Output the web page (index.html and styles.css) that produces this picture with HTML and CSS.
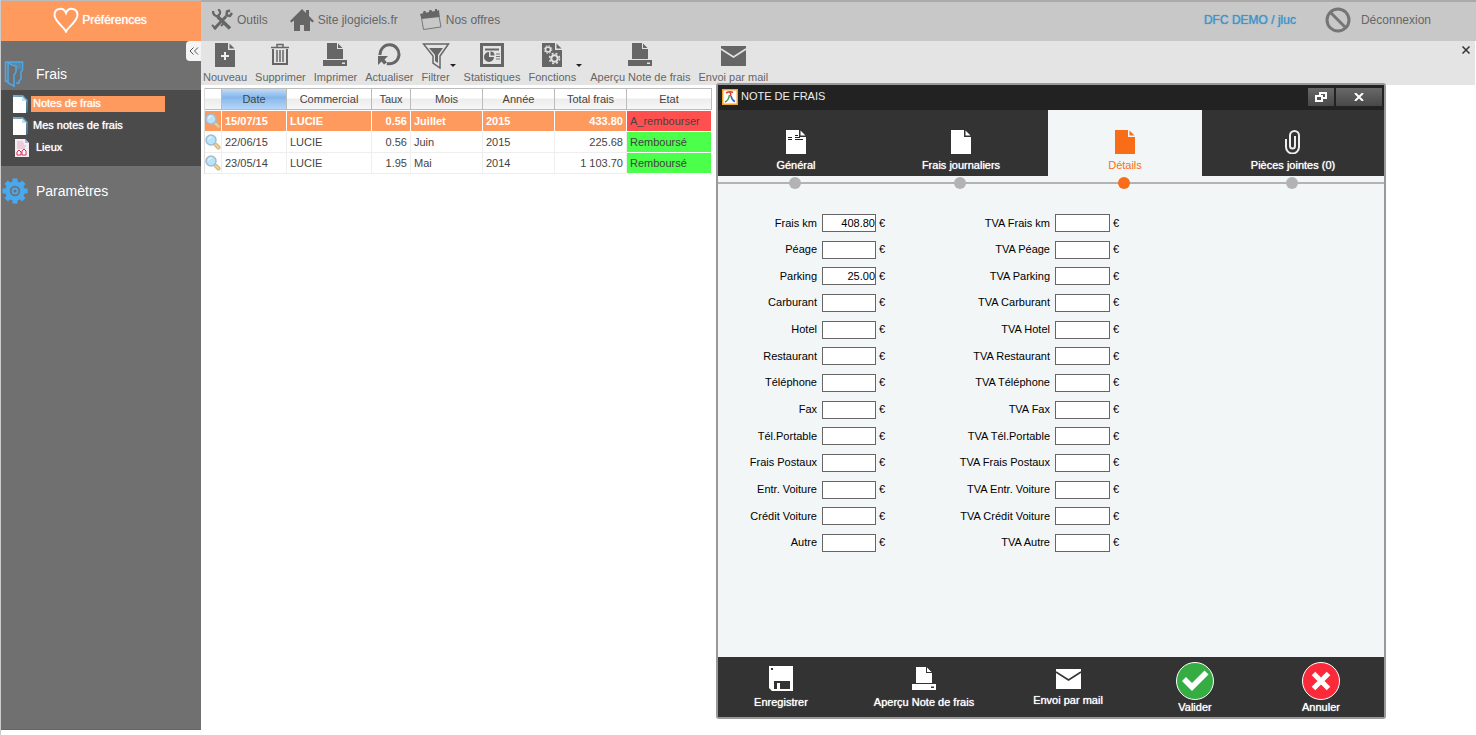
FILE: index.html
```html
<!DOCTYPE html>
<html lang="fr">
<head>
<meta charset="utf-8">
<title>Notes de frais</title>
<link rel="stylesheet" href="styles.css">
</head>
<body>
<svg class="defs" aria-hidden="true">
  <defs>
    <linearGradient id="steel" x1="0" y1="0" x2="1" y2="1"><stop offset="0" stop-color="#7fb0c8"/><stop offset="1" stop-color="#3f6f8c"/></linearGradient>
    <symbol id="i-page" viewBox="0 0 20 24"><path fill="currentColor" d="M0 0h13v7h7v17H0z"/><path fill="currentColor" d="M14.500 0.500L19.500 5.500h-5z"/></symbol>
    <symbol id="i-printer" viewBox="0 0 24 24"><path fill="currentColor" fill-rule="evenodd" d="M4 0h10v6h6v10H4zM15 0.500L19.500 5H15zM0 17h24v6H0zM19 19.500v1.500h3v-1.500z"/></symbol>
    <symbol id="i-mail" viewBox="0 0 25 20"><path fill="currentColor" d="M0 0h25v20H0z"/><path class="fold" fill="none" stroke-width="1.500" d="M0 3l12.500 8L25 3"/></symbol>
    <symbol id="i-loupe" viewBox="0 0 16 16"><path stroke="#c9b48e" stroke-width="4" stroke-linecap="round" d="M10.500 10.500l3 3"/><path stroke="#f3cf8a" stroke-width="2" stroke-linecap="round" d="M10.500 10.500l3 3"/><circle cx="6" cy="6" r="5" fill="#b9e3fa" stroke="#9fbdd2" stroke-width="1.500"/><path d="M3.500 5.500a3 3 0 0 1 3-2.500" stroke="#fff" fill="none"/></symbol>
    <symbol id="i-note" viewBox="0 0 16 18"><path fill="url(#steel)" d="M1 0h10l5 5v12l-2 1V6H1z"/><path fill="#fff" d="M1 2h9v4h4v12H1z"/><path fill="#bfe0ee" d="M10 1l5 5h-5z"/></symbol>
  </defs>
</svg>
<div class="app">
  <aside class="sidebar">
    <a class="prefs" href="#"><svg width="26" height="26" viewBox="0 0 26 26"><path d="M13 24.500C11 20 1.500 14.500 1.500 8c0-7 9-8.500 11.500-2C15.500-.500 24.500 1 24.500 8c0 6.500-9.500 12-11.500 16.500z" fill="none" stroke="#fff" stroke-width="2"/></svg><span>Préférences</span></a>
    <nav class="menu">
      <button class="collapse" aria-label="Réduire le menu"><svg width="10" height="8" viewBox="0 0 10 8"><path d="M4.500 .500L1 4l3.500 3.500M9 .500L5.500 4 9 7.500" fill="none" stroke="#555"/></svg></button>
      <a class="section first" href="#"><svg width="26" height="28" viewBox="0 0 26 28"><path d="M3.500 22V2h17v8l-1.500 2v7l-2 2v2h-3M3.500 2v19l3 1M10 5l4 1v6l-2 3v11l-6-3V2.500z" fill="none" stroke="#49a9ee" stroke-width="1.500"/><path d="M7 2l5 3 4 5 3-1V2z" fill="#49a9ee" opacity=".4"/></svg>Frais</a>
      <ul class="submenu">
        <li><a class="current" href="#"><svg width="16" height="18"><use href="#i-note"/></svg><span>Notes de frais</span></a></li>
        <li><a href="#"><svg width="16" height="18"><use href="#i-note"/></svg><span>Mes notes de frais</span></a></li>
        <li><a class="places" href="#"><svg width="16" height="18" viewBox="0 0 16 18"><path d="M1 0h10l4 4v14H1z" fill="#f3eef6"/><path d="M11 0v4h4z" fill="#a9b7d8"/><path d="M3 3h6M3 5h7M3 7h9M3 9h8" stroke="#e9a9b9"/><path d="M3 16v-3l2-2 2 2v3zM8 16v-4l2-2 2 2v4z" fill="#fff" stroke="#d9315a"/></svg><span>Lieux</span></a></li>
      </ul>
      <a class="section" href="#"><svg width="26" height="26" viewBox="0 0 26 26"><g fill="none" stroke="#49a9ee"><circle cx="13" cy="13" r="7.500" stroke-width="4.500"/><circle cx="13" cy="13" r="2.500" stroke-width="2"/></g><path stroke="#49a9ee" stroke-width="5" d="M13 0.500v4M13 21.500v4M.500 13h4M21.500 13h4M4.200 4.200L7 7M19 19l2.800 2.800M21.800 4.200L19 7M7 19l-2.800 2.800"/></svg>Paramètres</a>
    </nav>
  </aside>
  <div class="content">
    <header class="topbar">
      <a href="#"><svg width="22" height="22" viewBox="0 0 22 22"><g fill="none" stroke="#666"><path d="M6.500 7.500L19 19.500" stroke-width="3.500"/><path d="M2 2c0 5 4 6 6 4s1-5-1-5.500" stroke-width="2.200"/><path d="M15 7.500L3 20" stroke-width="3"/><path d="M19 1.500l-3 1-.500 4 3.500.500 2-3" stroke-width="2.500"/><path d="M13 14l-3 3M1 16l4 4" stroke-width="2"/></g></svg>Outils</a>
      <a href="#"><svg width="24" height="22" viewBox="0 0 24 22"><path fill="#666" d="M12 0l4 4V1h3v6l5 5-1.500 1.500L20 11.500V22h-6v-6h-4v6H4V11.500l-2.500 2L0 12z"/></svg>Site jlogiciels.fr</a>
      <a href="#"><svg width="22" height="22" viewBox="0 0 22 22"><path fill="#666" d="M0 5l3-.800L3.500 2l2 0 .500 1.700 3-.600.500-2h2l.500 1.500 3-.600V0h2v1.800L19 1l.800 7L1.500 10z"/><path fill="none" stroke="#777" d="M1.500 9l2 11.500L21 18 19 7"/></svg>Nos offres</a>
      <a class="account" href="#">DFC DEMO / jluc</a>
      <a class="logout" href="#"><svg width="26" height="26" viewBox="0 0 26 26"><g fill="none" stroke="#757575" stroke-width="3"><circle cx="13" cy="13" r="11"/><path d="M5 5l16 16"/></g></svg>Déconnexion</a>
    </header>
    <div class="toolbar">
      <button><span class="stack"><svg width="20" height="24" viewBox="0 0 20 24"><use href="#i-page"/><path d="M6 13h8M10 9v8" stroke="#eee" stroke-width="2"/></svg>Nouveau</span></button>
      <button><span class="stack"><svg width="20" height="24" viewBox="0 0 20 24"><g fill="none" stroke="#666"><path d="M1 4.500h18M7 4V1.500h6V4" stroke-width="1.500"/><path d="M3 6v15h14V6" stroke-width="2"/><path d="M7 7v12M10 7v12M13 7v12" stroke-width="1.500"/></g></svg>Supprimer</span></button>
      <button><span class="stack"><svg width="24" height="24"><use href="#i-printer"/></svg>Imprimer</span></button>
      <button><span class="stack"><svg width="24" height="24" viewBox="0 0 24 24"><path d="M3 12A9.500 9.500 0 1 1 10 20.500" fill="none" stroke="#666" stroke-width="3"/><path d="M1 13h10l-3.500 3.500 2.500 3-3 2-2.500-3L1 22z" fill="#666"/></svg>Actualiser</span></button>
      <button><span class="stack"><svg width="28" height="26" viewBox="0 0 28 26"><path d="M1.500 1h25L18 13v12l-7-5v-7z" fill="none" stroke="#666" stroke-width="1.500"/><path d="M7 5h14l-5 7v8l-3-2v-6z" fill="#666"/></svg>Filtrer</span><span class="caret"></span></button>
      <button><span class="stack"><svg width="24" height="24" viewBox="0 0 24 24"><path d="M1.500 1.500h21v21h-21z" fill="none" stroke="#666" stroke-width="3"/><path d="M5 6.500h14" stroke="#666" stroke-width="2"/><path d="M9 9v5h5a5 5 0 1 1-5-5zM10.500 8.500a4 4 0 0 1 4 4h-4z" fill="#666"/><path d="M16 11h4M16 13.500h4M16 16h4" stroke="#777"/></svg>Statistiques</span></button>
      <button><span class="stack"><svg width="20" height="24" viewBox="0 0 20 24"><use href="#i-page"/><g fill="none" stroke="#e4e4e4"><circle cx="6" cy="6.500" r="2.500" stroke-width="1.500"/><circle cx="6" cy="6.500" r="3.800" stroke-dasharray="1.500 1.500"/><circle cx="12.500" cy="15.500" r="3.200" stroke-width="2"/><circle cx="12.500" cy="15.500" r="5" stroke-width="1.500" stroke-dasharray="2 2"/></g></svg>Fonctions</span><span class="caret"></span></button>
      <button><span class="stack"><svg width="24" height="24"><use href="#i-printer"/></svg>Aperçu Note de frais</span></button>
      <button><span class="stack"><svg width="25" height="20"><use href="#i-mail"/></svg>Envoi par mail</span></button>
      <button class="close-tab" aria-label="Fermer l'onglet"><svg width="8" height="8" viewBox="0 0 8 8"><path d="M.500 .500l7 7M7.500 .500l-7 7" stroke="#333" stroke-width="1.500"/></svg></button>
    </div>
    <main class="list">
      <table>
        <colgroup><col class="c-icon"><col class="c-date"><col class="c-who"><col class="c-rate"><col class="c-mid"><col class="c-mid"><col class="c-mid"><col class="c-state"></colgroup>
        <thead><tr><th></th><th class="sorted">Date</th><th>Commercial</th><th>Taux</th><th>Mois</th><th>Année</th><th>Total frais</th><th>Etat</th></tr></thead>
        <tbody>
          <tr class="selected"><td class="view"><svg width="16" height="16"><use href="#i-loupe"/></svg></td><td>15/07/15</td><td>LUCIE</td><td class="num">0.56</td><td>Juillet</td><td>2015</td><td class="num">433.80</td><td class="due">A_rembourser</td></tr>
          <tr><td class="view"><svg width="16" height="16"><use href="#i-loupe"/></svg></td><td>22/06/15</td><td>LUCIE</td><td class="num">0.56</td><td>Juin</td><td>2015</td><td class="num">225.68</td><td class="paid">Remboursé</td></tr>
          <tr><td class="view"><svg width="16" height="16"><use href="#i-loupe"/></svg></td><td>23/05/14</td><td>LUCIE</td><td class="num">1.95</td><td>Mai</td><td>2014</td><td class="num">1 103.70</td><td class="paid">Remboursé</td></tr>
        </tbody>
      </table>
    </main>
  </div>
</div>

<section class="window" role="dialog" aria-labelledby="win-title">
  <header class="titlebar">
    <svg width="16" height="16" viewBox="0 0 16 16"><path d="M.750 .750h14.500v14.500H.750z" fill="#fff" stroke="#f5a52c" stroke-width="1.500"/><g fill="none" stroke-width="1.500"><path d="M4 4c3-1.500 6-1 7-.500M8 3.500c1 1 1 2 .500 3.500" stroke="#e03a2c"/><path d="M7.500 6C7 9 5.500 12 3 13" stroke="#39a245"/><path d="M9 7c.500 2.500 1.500 4.500 4 5.500" stroke="#3a62b8"/></g></svg>
    <h1 id="win-title">NOTE DE FRAIS</h1>
    <button class="restore" aria-label="Restaurer"><svg width="12" height="10" viewBox="0 0 12 10"><path d="M5 3V1h6v5H8M1 4h6v5H1z" fill="none" stroke="#fff" stroke-width="2"/></svg></button>
    <button class="close" aria-label="Fermer"><svg width="10" height="8" viewBox="0 0 10 8"><path d="M1 0l8 8M9 0L1 8" stroke="#fff" stroke-width="2"/></svg></button>
  </header>
  <div class="tabs" role="tablist">
    <button role="tab"><svg width="20" height="24" viewBox="0 0 20 24"><use href="#i-page"/><path d="M2 7.500h4M2 9.500h4M9 5.500h3M9 7.500h5M9 9.500h8" stroke="#222"/></svg>Général</button>
    <button role="tab"><svg width="20" height="24"><use href="#i-page"/></svg>Frais journaliers</button>
    <button role="tab" aria-selected="true" class="active"><svg width="20" height="24"><use href="#i-page"/></svg>Détails</button>
    <button role="tab"><svg width="18" height="24" viewBox="0 0 18 24"><path d="M2 9v8a6.500 6.500 0 0 0 13 0V5.500a4.500 4.500 0 0 0-9 0V16a2.500 2.500 0 0 0 5 0V6" fill="none" stroke="#eee" stroke-width="2"/></svg>Pièces jointes (0)</button>
  </div>
  <div class="steps"><i></i><i></i><i class="active"></i><i></i></div>
  <form class="fields">
    <div class="column">
      <div class="field"><label for="km">Frais km</label><input id="km" value="408.80"><span>€</span></div>
      <div class="field"><label for="peage">Péage</label><input id="peage"><span>€</span></div>
      <div class="field"><label for="parking">Parking</label><input id="parking" value="25.00"><span>€</span></div>
      <div class="field"><label for="carburant">Carburant</label><input id="carburant"><span>€</span></div>
      <div class="field"><label for="hotel">Hotel</label><input id="hotel"><span>€</span></div>
      <div class="field"><label for="restaurant">Restaurant</label><input id="restaurant"><span>€</span></div>
      <div class="field"><label for="telephone">Téléphone</label><input id="telephone"><span>€</span></div>
      <div class="field"><label for="fax">Fax</label><input id="fax"><span>€</span></div>
      <div class="field"><label for="portable">Tél.Portable</label><input id="portable"><span>€</span></div>
      <div class="field"><label for="postaux">Frais Postaux</label><input id="postaux"><span>€</span></div>
      <div class="field"><label for="entretien">Entr. Voiture</label><input id="entretien"><span>€</span></div>
      <div class="field"><label for="credit">Crédit Voiture</label><input id="credit"><span>€</span></div>
      <div class="field"><label for="autre">Autre</label><input id="autre"><span>€</span></div>
    </div>
    <div class="column vat">
      <div class="field"><label for="tva-km">TVA Frais km</label><input id="tva-km"><span>€</span></div>
      <div class="field"><label for="tva-peage">TVA Péage</label><input id="tva-peage"><span>€</span></div>
      <div class="field"><label for="tva-parking">TVA Parking</label><input id="tva-parking"><span>€</span></div>
      <div class="field"><label for="tva-carburant">TVA Carburant</label><input id="tva-carburant"><span>€</span></div>
      <div class="field"><label for="tva-hotel">TVA Hotel</label><input id="tva-hotel"><span>€</span></div>
      <div class="field"><label for="tva-restaurant">TVA Restaurant</label><input id="tva-restaurant"><span>€</span></div>
      <div class="field"><label for="tva-telephone">TVA Téléphone</label><input id="tva-telephone"><span>€</span></div>
      <div class="field"><label for="tva-fax">TVA Fax</label><input id="tva-fax"><span>€</span></div>
      <div class="field"><label for="tva-portable">TVA Tél.Portable</label><input id="tva-portable"><span>€</span></div>
      <div class="field"><label for="tva-postaux">TVA Frais Postaux</label><input id="tva-postaux"><span>€</span></div>
      <div class="field"><label for="tva-entretien">TVA Entr. Voiture</label><input id="tva-entretien"><span>€</span></div>
      <div class="field"><label for="tva-credit">TVA Crédit Voiture</label><input id="tva-credit"><span>€</span></div>
      <div class="field"><label for="tva-autre">TVA Autre</label><input id="tva-autre"><span>€</span></div>
    </div>
  </form>
  <footer class="actions">
    <button><svg width="24" height="25" viewBox="0 0 24 25"><path fill="#fff" fill-rule="evenodd" d="M0 0h24v25H3l-3-3zM2 2v2h2V2zM5 15v8h16v-8z"/><path fill="#fff" d="M8 17h3v6H8z"/></svg>Enregistrer</button>
    <button><svg width="24" height="24"><use href="#i-printer"/></svg>Aperçu Note de frais</button>
    <button><svg width="25" height="20"><use href="#i-mail"/></svg>Envoi par mail</button>
    <button class="round"><svg width="38" height="38" viewBox="0 0 38 38"><circle cx="19" cy="19" r="18.500" fill="#35ad43" stroke="#fff"/><path d="M6 19l4-4 6 6L28.500 8.500l4 4L16 29z" fill="#fff"/></svg>Valider</button>
    <button class="round"><svg width="38" height="38" viewBox="0 0 38 38"><circle cx="19" cy="19" r="18.500" fill="#fb2a3b" stroke="#fff"/><path d="M11.500 11.500l15 15M26.500 11.500l-15 15" stroke="#fff" stroke-width="5"/></svg>Annuler</button>
  </footer>
</section>
</body>
</html>
```
FILE: styles.css
```css
* { box-sizing: border-box; }
body { margin: 0; font: 11px/13px "Liberation Sans", Arial, sans-serif; color: #444; background: #fff; overflow: hidden; }
.defs { position: absolute; width: 0; height: 0; }
a { color: inherit; text-decoration: none; }
button { font: inherit; color: inherit; border: 0; padding: 0; background: none; cursor: pointer; }
svg { display: block; flex: none; }

.app { display: flex; min-height: 100vh; padding-bottom: 5px; border-left: 1px solid #ccc; }
.sidebar { display: flex; flex-direction: column; width: 200px; flex: none; color: #fff; }
.prefs { display: flex; align-items: center; justify-content: center; gap: 3px; height: 41px; padding: 0 2px 2px 0; border-top: 1px solid #bbb; background: #ff9a5e; font-size: 12px; text-shadow: 0 0 1px currentColor; }
.menu { position: relative; flex: 1; background: #707070; border-bottom: 1px solid #666; }
.collapse { position: absolute; top: 0; right: 0; width: 15px; height: 20px; padding-left: 3px; background: #f4f4f4; border-radius: 4px 0 0 4px; }
.section { display: flex; align-items: center; gap: 8px; height: 50px; padding-left: 1px; font-size: 14px; }
.section.first { height: 49px; padding-top: 17px; }
.submenu { list-style: none; margin: 0; padding: 3px 0 7px; background: #4b4b4b; }
.submenu a { display: flex; align-items: center; gap: 3px; height: 22px; padding-left: 11px; text-shadow: 0 0 1px currentColor; }
.submenu span { width: 134px; padding: 1px 2px 2px; }
.submenu .current span { background: #ff9a5e; }
.submenu .places { padding-left: 13px; gap: 4px; }

.content { flex: 1; min-width: 0; }
.topbar { display: flex; align-items: center; gap: 22px; height: 41px; padding: 0 45px 3px 10px; border-top: 2px solid #aaa; background: #c8c8c8; color: #666; font-size: 12px; }
.topbar a { display: flex; align-items: center; gap: 4px; }
.topbar .account { margin-left: auto; color: #3f94cb; text-shadow: 0 0 1px currentColor; }
.topbar .logout { gap: 10px; margin-left: 7px; }

.toolbar { --fold: #e4e4e4; display: flex; gap: 8px; height: 44px; margin-right: 1px; padding: 2px 5px 1px 2px; background: #e4e4e4; color: #666; }
.toolbar button { display: flex; white-space: nowrap; }
.stack { display: flex; flex-direction: column; align-items: center; justify-content: space-between; height: 41px; }
.stack svg[height="20"] { margin-top: 3px; }
.caret { align-self: center; margin-top: 4px; border: 3px solid transparent; border-top-color: #222; border-bottom: 0; }
.fold { stroke: var(--fold); }
.toolbar .close-tab { margin-left: auto; padding-top: 3px; }

.list { padding: 3px; }
table { table-layout: fixed; width: 508px; border-spacing: 0; border-left: 1px solid #ddd; }
.c-icon { width: 17px; }
.c-date { width: 65px; }
.c-who { width: 85px; }
.c-rate { width: 39px; }
.c-mid { width: 72px; }
.c-state { width: 85px; }
th { height: 22px; padding: 0; font-weight: 400; border: 1px solid #bbb; border-left: 0; background: linear-gradient(#fff, #fff 45%, #ececec 50%, #f7f7f7); }
.sorted { background: linear-gradient(#c3dcf6, #7fb4ea 45%, #8dbcec 50%, #b5d6f8); }
td { height: 21px; padding: 0 3px; border-right: 1px solid #eee; border-bottom: 1px solid #eee; white-space: nowrap; }
td.view { padding: 0; }
tbody tr:first-child td { height: 22px; border-top: 1px solid #fff; }
.num { text-align: right; }
.selected td { background: #ff9a5e; color: #fff; font-weight: 700; border-color: #fff; }
.selected td.due { background: #ff5050; color: #444; font-weight: 400; }
td.due, td.paid { border-color: #fff; }
td.paid { background: #4bff4b; }

.window { position: absolute; top: 83px; right: 90px; width: 670px; border: 2px solid #999; border-radius: 3px; background: #f2f6f7; color: #000; }
.titlebar { display: flex; align-items: center; gap: 2px; height: 25px; padding: 0 2px 2px 4px; background: #222; }
.titlebar h1 { flex: 1; margin: 0; padding-left: 1px; font-size: 11px; font-weight: 400; color: #eee; }
.titlebar button { display: grid; place-items: center; height: 18px; background: linear-gradient(#686868, #484848); }
.restore { width: 26px; }
.close { width: 46px; }
.tabs, .steps { display: grid; grid-template-columns: 156fr 174fr 154fr 182fr; }
.tabs button { display: flex; flex-direction: column; align-items: center; justify-content: flex-end; gap: 5px; height: 66px; padding-bottom: 4px; background: #333; color: #fff; text-shadow: 0 0 1px currentColor; }
.tabs button.active { background: #f2f6f7; color: #f96d18; text-shadow: none; }
.steps { height: 14px; align-items: center; justify-items: center; background: linear-gradient(#b3b3b3, #b3b3b3) center / 100% 2px no-repeat; }
.steps i { width: 12px; height: 12px; margin-right: 3px; border-radius: 50%; background: #b3b3b3; }
.steps .active { background: #f96d18; }

.fields { display: flex; padding: 24px 0 105px; }
.column { display: flex; flex-direction: column; justify-content: space-between; width: 168px; height: 338px; }
.vat { width: 234px; }
.field { display: flex; align-items: center; height: 18px; }
.field label { flex: 1; margin-right: 5px; text-align: right; }
.field input { width: 54px; height: 18px; padding: 0; border: 1px solid #666; background: #fff; font: inherit; color: #000; text-align: right; }
.vat input { width: 55px; }
.field span { width: 7px; margin-left: 3px; }

.actions { --fold: #333; display: grid; grid-template-columns: 126fr 160fr 128fr 126fr 126fr; height: 60px; padding-top: 1px; background: #333; color: #fff; }
.actions button { display: flex; flex-direction: column; align-items: center; justify-content: center; gap: 5px; text-shadow: 0 0 1px currentColor; }
.actions .round { gap: 1px; }
```
